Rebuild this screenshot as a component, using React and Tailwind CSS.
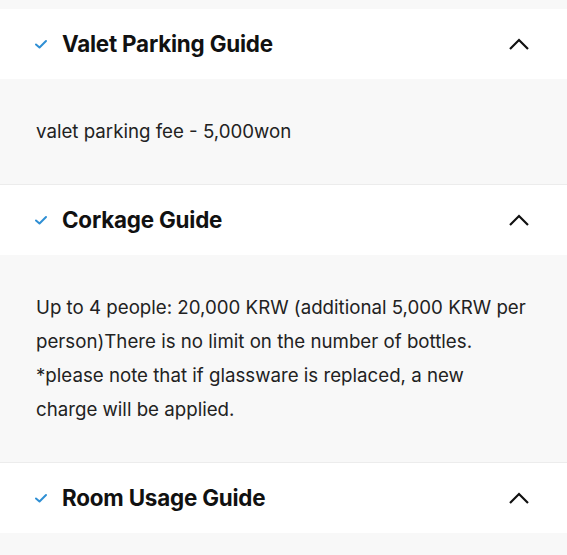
const sections = [
  {
    title: 'Valet Parking Guide',
    body: ['valet parking fee - 5,000won'],
  },
  {
    title: 'Corkage Guide',
    body: [
      'Up to 4 people: 20,000 KRW (additional 5,000 KRW per person)There is no limit on the number of bottles.',
      '*please note that if glassware is replaced, a new charge will be applied.',
    ],
  },
  {
    title: 'Room Usage Guide',
    body: null,
  },
];

function Check() {
  return (
    <svg width="14" height="14" viewBox="0 0 14 14" fill="none">
      <path d="M2 7.5 L5.5 10.5 L12 4" stroke="#2f8fd4" strokeWidth="2" strokeLinecap="round" strokeLinejoin="round" />
    </svg>
  );
}

function Chevron() {
  return (
    <svg width="24" height="16" viewBox="0 0 24 16" fill="none">
      <path d="M3 13 L12 4 L21 13" stroke="#111" strokeWidth="2.2" />
    </svg>
  );
}

export default function App() {
  return (
    <div className="min-h-[555px] bg-[#f8f8f8] pt-[9px]" style={{ fontFamily: 'Inter, "Noto Sans", sans-serif' }}>
      {sections.map((s) => (
        <div key={s.title}>
          <div className="flex items-center justify-between bg-white h-[70px] pl-[34px] pr-[36px]">
            <div className="flex items-center gap-[14px]">
              <Check />
              <span className="text-[22.4px] font-bold text-[#111] tracking-[-0.2px]">{s.title}</span>
            </div>
            <Chevron />
          </div>
          {s.body && (
            <div className="bg-[#f8f8f8] border-b border-[#ececec] pl-[36px] pr-[39px] pt-[36px] pb-[35px] text-[18.7px] leading-[34px] text-[#222]">
              {s.body.map((t) => (
                <p key={t}>{t}</p>
              ))}
            </div>
          )}
        </div>
      ))}
    </div>
  );
}
